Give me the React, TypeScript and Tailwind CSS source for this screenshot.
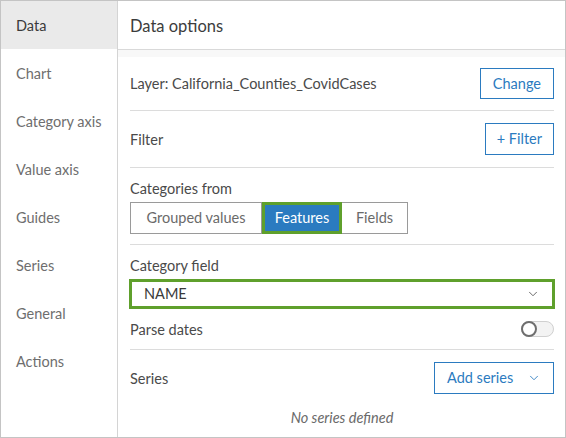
import { ChevronDown } from 'lucide-react'

const NAV = ['Data', 'Chart', 'Category axis', 'Value axis', 'Guides', 'Series', 'General', 'Actions']

export default function App() {
  return (
    <div
      className="w-[566px] h-[438px] flex border border-[#c4c4c4] bg-white text-[14.5px] text-[#4a4a4a] overflow-hidden"
      style={{ fontFamily: 'Lato, "Noto Sans", sans-serif' }}
    >
      <nav className="w-[117px] shrink-0 border-r border-[#d4d4d4] flex flex-col">
        {NAV.map((label, i) => (
          <div
            key={label}
            className={
              'h-[48px] flex items-center pl-[15px] pt-[2px] ' +
              (i === 0 ? 'bg-[#eaeaea] text-[#3a3a3a]' : 'text-[#6e6e6e]')
            }
          >
            {label}
          </div>
        ))}
      </nav>

      <main className="flex-1 flex flex-col">
        <div className="h-[49px] shrink-0 flex items-center px-[12px] pt-[2px] border-b border-[#d9d9d9] text-[16.5px] text-[#3c3c3c]">
          Data options
        </div>
        <div className="h-[7px] shrink-0 bg-[#f8f8f8]" />

        <div className="pl-[12px] pr-[11px] flex flex-col">
          <div className="h-[54px] flex items-center justify-between border-b border-[#dcdcdc]">
            <span className="pt-[1px]">Layer: California_Counties_CovidCases</span>
            <button className="h-[31px] px-[12px] border border-[#2b7bc0] text-[#2b7bc0]">Change</button>
          </div>

          <div className="h-[57px] flex items-center justify-between border-b border-[#dcdcdc]">
            <span className="pt-[1px]">Filter</span>
            <button className="h-[32px] px-[11px] border border-[#2b7bc0] text-[#2b7bc0]">+ Filter</button>
          </div>

          <div className="h-[77px] pt-[11px] flex flex-col gap-[3px] border-b border-[#dcdcdc]">
            <span className="leading-[20px]">Categories from</span>
            <div className="flex h-[32px]">
              <div className="w-[132px] flex items-center justify-center border border-[#9a9a9a] text-[#6a6a6a]">
                Grouped values
              </div>
              <div className="w-[80px] flex items-center justify-center border-[3px] border-[#5fa02c] bg-[#2b7bc0] text-white">
                Features
              </div>
              <div className="w-[66px] flex items-center justify-center border border-[#9a9a9a] border-l-0 text-[#6a6a6a]">
                Fields
              </div>
            </div>
          </div>

          <div className="pt-[11px] flex flex-col">
            <span className="leading-[20px]">Category field</span>
            <div className="mt-[3px] h-[30px] flex items-center justify-between px-[12px] border-[3px] border-[#5fa02c] -mx-[1px]">
              <span className="text-[#3a3a3a]">NAME</span>
              <ChevronDown size={14} strokeWidth={1.5} className="text-[#555]" />
            </div>
          </div>

          <div className="h-[41px] flex items-center justify-between border-b border-[#dcdcdc]">
            <span className="pt-[1px]">Parse dates</span>
            <div className="w-[33px] h-[16px] rounded-full border border-[#d0d0d0] bg-[#f3f3f3] flex items-center">
              <div className="w-[16px] h-[16px] -ml-[1px] rounded-full border-2 border-[#6e6e6e] bg-white" />
            </div>
          </div>

          <div className="h-[56px] flex items-center justify-between">
            <span className="pt-[1px]">Series</span>
            <button className="h-[32px] w-[120px] pl-[12px] pr-[12px] border border-[#2b7bc0] text-[#2b7bc0] flex items-center justify-between">
              <span>Add series</span>
              <ChevronDown size={14} strokeWidth={1.5} />
            </button>
          </div>

          <div className="pt-[2px] text-center italic text-[#6a6a6a] leading-[20px]">No series defined</div>
        </div>
      </main>
    </div>
  )
}
